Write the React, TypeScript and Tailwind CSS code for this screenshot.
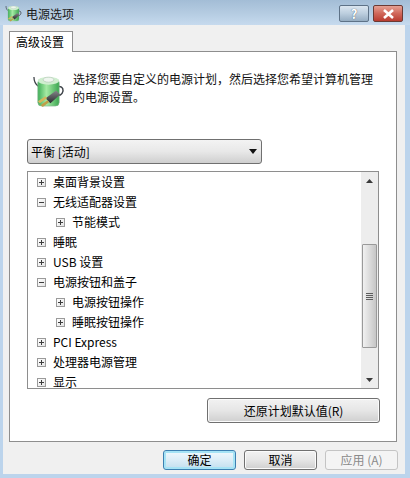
import type { ReactNode } from 'react'

const FONT = "font-['Noto_Sans_CJK_SC','Liberation_Sans',sans-serif]"

type TreeRow = { label: string; depth: 0 | 1; open?: boolean }

const TREE_ROWS: TreeRow[] = [
  { label: '桌面背景设置', depth: 0 },
  { label: '无线适配器设置', depth: 0, open: true },
  { label: '节能模式', depth: 1 },
  { label: '睡眠', depth: 0 },
  { label: 'USB 设置', depth: 0 },
  { label: '电源按钮和盖子', depth: 0, open: true },
  { label: '电源按钮操作', depth: 1 },
  { label: '睡眠按钮操作', depth: 1 },
  { label: 'PCI Express', depth: 0 },
  { label: '处理器电源管理', depth: 0 },
  { label: '显示', depth: 0 },
]

function PowerIcon({ size }: { size: number }) {
  return (
    <svg width={size} height={size} viewBox="0 0 32 34" className="shrink-0">
      <defs>
        <linearGradient id="cell" x1="0" x2="1" y1="0" y2="0">
          <stop offset="0" stopColor="#3fae58" />
          <stop offset="0.4" stopColor="#a5eaa4" />
          <stop offset="1" stopColor="#3aa650" />
        </linearGradient>
        <linearGradient id="plug" x1="0" x2="0" y1="0" y2="1">
          <stop offset="0" stopColor="#85878a" />
          <stop offset="1" stopColor="#2a2c2f" />
        </linearGradient>
      </defs>
      <path d="M1 2 C1 8 3 10 6 12" fill="none" stroke="#3b4046" strokeWidth="1.3" />
      <path d="M26 12 C31 11 32 16 30 19 C28 22 26 21 24 22" fill="none" stroke="#3b4046" strokeWidth="1.5" />
      <rect x="5" y="4" width="22" height="28" rx="4" fill="url(#cell)" stroke="#86b890" strokeWidth="0.7" />
      <ellipse cx="16" cy="6" rx="11" ry="4" fill="#cfeecf" />
      <ellipse cx="16" cy="4.8" rx="5.5" ry="2.6" fill="#eef5ee" stroke="#a8bfac" strokeWidth="0.6" />
      <path d="M13 24 L24 16 L28 20 L18 29 Z" fill="url(#plug)" />
      <path d="M5 27 L13 22 L14.5 24 L7 29 Z" fill="#d4b65c" />
      <path d="M8 31 L15 26 L16.5 28 L10 33 Z" fill="#bf9e48" />
    </svg>
  )
}

function Expander({ open }: { open?: boolean }) {
  return (
    <span className="relative block h-[9px] w-[9px] shrink-0 border border-[#9a9a9a] bg-gradient-to-br from-white to-[#e4e4e4]">
      <span className="absolute left-[1px] top-[3px] h-[1px] w-[5px] bg-[#3c3c3c]" />
      {!open && <span className="absolute left-[3px] top-[1px] h-[5px] w-[1px] bg-[#3c3c3c]" />}
    </span>
  )
}

function AeroButton({ children, className, state }: { children: ReactNode; className: string; state?: 'default' | 'disabled' }) {
  const look =
    state === 'default'
      ? 'border-[#3c7fb1] shadow-[inset_0_0_0_2px_#a6e3f5] bg-gradient-to-b from-[#f2f9fd] via-[#dcedf7] to-[#c2dfee] text-black'
      : state === 'disabled'
        ? 'border-[#c4c4c4] bg-[#f4f4f4] text-[#8a8a8a]'
        : 'border-[#707070] shadow-[inset_0_0_0_1px_#fbfbfb] bg-gradient-to-b from-[#f2f2f2] via-[#e6e6e6] to-[#cfcfcf] text-black'
  return (
    <div className={`flex items-center justify-center rounded-[3px] border text-[12px] leading-none ${look} ${className}`}>
      {children}
    </div>
  )
}

function Scrollbar() {
  return (
    <div className="flex w-[17px] shrink-0 flex-col items-center bg-[#ededed]">
      <div className="flex h-[17px] w-full shrink-0 items-center justify-center">
        <svg width="7" height="4" viewBox="0 0 7 4"><path d="M3.5 0 L7 4 H0 Z" fill="#3a3a3a" /></svg>
      </div>
      <div className="mt-[55px] flex h-[104px] w-[15px] shrink-0 items-center justify-center rounded-[1px] border border-[#9a9a9a] bg-gradient-to-r from-[#f1f1f1] to-[#c6c6c6]">
        <div className="flex flex-col gap-[1px]">
          {[0, 1, 2, 3].map(i => (
            <div key={i} className="h-[1px] w-[7px] bg-[#5d5d5d]" />
          ))}
        </div>
      </div>
      <div className="flex-1" />
      <div className="flex h-[17px] w-full shrink-0 items-center justify-center">
        <svg width="7" height="4" viewBox="0 0 7 4"><path d="M0 0 H7 L3.5 4 Z" fill="#3a3a3a" /></svg>
      </div>
    </div>
  )
}

export default function App() {
  return (
    <div className={`flex h-[478px] w-[410px] flex-col overflow-hidden bg-[#bcd4ec] text-[12px] text-black ${FONT}`}>
      {/* Barra de título */}
      <div className="flex h-[25px] shrink-0 items-start bg-gradient-to-b from-[#a3bdd6] via-[#b4cbe1] to-[#c6daee] pl-[5px] pr-[7px] pt-[5px]">
        <PowerIcon size={17} />
        <span className="ml-[4px] mt-[1px] leading-[16px] text-[#1a1a1a]">电源选项</span>
        <div className="ml-auto flex gap-[4px]">
          <div className="flex h-[17px] w-[30px] items-center justify-center rounded-[2px] border border-[#5e7287] bg-gradient-to-b from-[#dbe6f0] via-[#bccede] to-[#96adc2] text-[13px] font-bold leading-none text-white [text-shadow:0_0_1px_#25384a]">
            ?
          </div>
          <div className="flex h-[17px] w-[30px] items-center justify-center rounded-[2px] border border-[#6b3a34] bg-gradient-to-b from-[#e5a093] via-[#d0675a] to-[#b93b30]">
            <svg width="13" height="10" viewBox="0 0 13 10">
              <path d="M2 1 L11 9 M11 1 L2 9" stroke="#ffffff" strokeWidth="2.6" />
            </svg>
          </div>
        </div>
      </div>

      {/* Cuerpo del diálogo */}
      <div className="mx-[3px] mb-[4px] mr-[5px] flex flex-1 flex-col bg-[#f0f0f0] pl-[6px] pr-[8px] pt-[6px]">
        <div className="relative z-10 -mb-[1px] flex h-[21px] w-[64px] items-center justify-center border border-b-0 border-[#8e8e8e] bg-white pr-[2px]">
          高级设置
        </div>
        <div className="flex h-[391px] flex-col border border-[#8e8e8e] bg-white pl-[17px] pr-[16px]">
          <div className="mt-[17px] flex h-[50px] items-start pl-[5px]">
            <div className="mt-[6px]">
              <PowerIcon size={33} />
            </div>
            <p className="ml-[8px] mt-[1px] w-[306px] leading-[18px] text-[#111]">
              选择您要自定义的电源计划，然后选择您希望计算机管理的电源设置。
            </p>
          </div>
          <div className="mt-[20px] flex h-[25px] w-[235px] items-center justify-between rounded-[3px] border border-[#707070] bg-gradient-to-b from-[#f3f3f3] via-[#e8e8e8] to-[#cfcfcf] pl-[3px] pr-[4px]">
            <span>平衡 [活动]</span>
            <svg width="8" height="5" viewBox="0 0 8 5"><path d="M0 0 H8 L4 5 Z" fill="#111" /></svg>
          </div>
          <div className="mt-[7px] flex h-[218px] w-[352px] border border-[#8e8e8e] bg-white">
            <div className="h-full min-w-0 flex-1 overflow-hidden">
              {TREE_ROWS.map(row => (
                <div
                  key={row.label}
                  className={`flex h-[20px] items-center ${row.depth === 1 ? 'pl-[28px]' : 'pl-[9px]'}`}
                >
                  <Expander open={row.open} />
                  <span className="ml-[7px] whitespace-nowrap leading-none">{row.label}</span>
                </div>
              ))}
            </div>
            <Scrollbar />
          </div>
          <div className="mt-[9px] flex w-[353px] justify-end">
            <AeroButton className="h-[25px] w-[173px]">还原计划默认值(R)</AeroButton>
          </div>
        </div>
        <div className="-mr-[1px] flex justify-end gap-[8px] pt-[8px]">
          <AeroButton state="default" className="h-[20px] w-[73px]">确定</AeroButton>
          <AeroButton className="h-[20px] w-[73px]">取消</AeroButton>
          <AeroButton state="disabled" className="h-[20px] w-[73px]">应用 (A)</AeroButton>
        </div>
      </div>
    </div>
  )
}
